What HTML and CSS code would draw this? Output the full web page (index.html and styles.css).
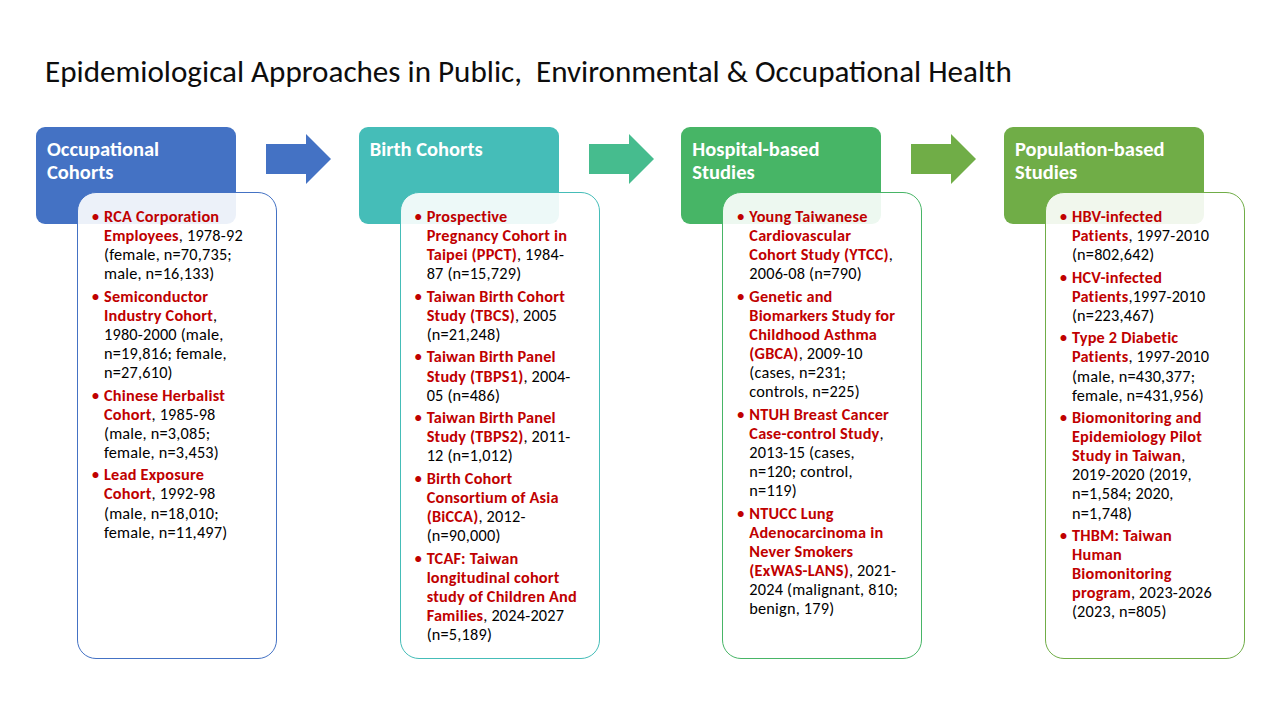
FILE: index.html
```html
<!DOCTYPE html>
<html lang="en">
<head>
<meta charset="utf-8">
<title>Epidemiological Approaches</title>
<link rel="stylesheet" href="styles.css">
</head>
<body>
<main class="slide">
  <h1 class="title">Epidemiological Approaches in Public,&nbsp; Environmental &amp; Occupational Health</h1>
  <section class="flow">
    <div class="head h1">Occupational<br>Cohorts</div>
    <svg class="arrow a1" viewBox="0 0 65 50" width="65" height="50"><path d="M0 10H40V0L65 25L40 50V40H0Z" fill="#4472C4"/></svg>
    <div class="head h2">Birth Cohorts</div>
    <svg class="arrow a2" viewBox="0 0 65 50" width="65" height="50"><path d="M0 10H40V0L65 25L40 50V40H0Z" fill="#46BC8E"/></svg>
    <div class="head h3">Hospital-based<br>Studies</div>
    <svg class="arrow a3" viewBox="0 0 65 50" width="65" height="50"><path d="M0 10H40V0L65 25L40 50V40H0Z" fill="#70AD47"/></svg>
    <div class="head h4">Population-based<br>Studies</div>

    <ul class="box b1">
      <li><span><b>RCA Corporation<br>Employees</b>, 1978-92<br>(female, n=70,735;<br>male, n=16,133)</span></li>
      <li><span><b>Semiconductor<br>Industry Cohort</b>,<br>1980-2000 (male,<br>n=19,816; female,<br>n=27,610)</span></li>
      <li><span><b>Chinese Herbalist<br>Cohort</b>, 1985-98<br>(male, n=3,085;<br>female, n=3,453)</span></li>
      <li><span><b>Lead Exposure<br>Cohort</b>, 1992-98<br>(male, n=18,010;<br>female, n=11,497)</span></li>
    </ul>
    <ul class="box b2">
      <li><span><b>Prospective<br>Pregnancy Cohort in<br>Taipei (PPCT)</b>, 1984-<br>87 (n=15,729)</span></li>
      <li><span><b>Taiwan Birth Cohort<br>Study (TBCS)</b>, 2005<br>(n=21,248)</span></li>
      <li><span><b>Taiwan Birth Panel<br>Study (TBPS1)</b>, 2004-<br>05 (n=486)</span></li>
      <li><span><b>Taiwan Birth Panel<br>Study (TBPS2)</b>, 2011-<br>12 (n=1,012)</span></li>
      <li><span><b>Birth Cohort<br>Consortium of Asia<br>(BiCCA)</b>, 2012-<br>(n=90,000)</span></li>
      <li><span><b>TCAF: Taiwan<br>longitudinal cohort<br>study of Children And<br>Families</b>, 2024-2027<br>(n=5,189)</span></li>
    </ul>
    <ul class="box b3">
      <li><span><b>Young Taiwanese<br>Cardiovascular<br>Cohort Study (YTCC)</b>,<br>2006-08 (n=790)</span></li>
      <li><span><b>Genetic and<br>Biomarkers Study for<br>Childhood Asthma<br>(GBCA)</b>, 2009-10<br>(cases, n=231;<br>controls, n=225)</span></li>
      <li><span><b>NTUH Breast Cancer<br>Case-control Study</b>,<br>2013-15 (cases,<br>n=120; control,<br>n=119)</span></li>
      <li><span><b>NTUCC Lung<br>Adenocarcinoma in<br>Never Smokers<br>(ExWAS-LANS)</b>, 2021-<br>2024 (malignant, 810;<br>benign, 179)</span></li>
    </ul>
    <ul class="box b4">
      <li><span><b>HBV-infected<br>Patients</b>, 1997-2010<br>(n=802,642)</span></li>
      <li><span><b>HCV-infected<br>Patients</b>,1997-2010<br>(n=223,467)</span></li>
      <li><span><b>Type 2 Diabetic<br>Patients</b>, 1997-2010<br>(male, n=430,377;<br>female, n=431,956)</span></li>
      <li><span><b>Biomonitoring and<br>Epidemiology Pilot<br>Study in Taiwan</b>,<br>2019-2020 (2019,<br>n=1,584; 2020,<br>n=1,748)</span></li>
      <li><span><b>THBM: Taiwan<br>Human<br>Biomonitoring<br>program</b>, 2023-2026<br>(2023, n=805)</span></li>
    </ul>
  </section>
</main>
</body>
</html>
```

FILE: styles.css
```css
* { box-sizing: border-box; }
html, body { margin: 0; padding: 0; background: #ffffff; }
body {
  width: 1280px;
  height: 720px;
  overflow: hidden;
  font-family: Carlito, Calibri, Lato, "Noto Sans", sans-serif;
  color: #000000;
}
.slide {
  width: 1280px;
  height: 720px;
  padding: 52px 0 0 36px;
}
.title {
  margin: 0 0 0 9px;
  font-weight: 400;
  font-size: 31.1px;
  line-height: 38px;
  color: #0d0d0d;
  white-space: nowrap;
}
.flow {
  margin-top: 37px;
  display: grid;
  grid-template-columns: 200px 30px 65px 27.67px 200px 30px 65px 27.67px 200px 30px 65px 27.67px 200px 41px;
  grid-template-rows: 97px auto;
}
.head {
  grid-row: 1;
  border-radius: 9px;
  color: #ffffff;
  font-weight: 700;
  font-size: 20.5px;
  line-height: 22.5px;
  padding: 11px 11px 0 11px;
  white-space: nowrap;
}
.h1 { grid-column: 1; background: #4472C4; }
.h2 { grid-column: 5; background: #45BDB8; }
.h3 { grid-column: 9; background: #47B566; }
.h4 { grid-column: 13; background: #70AD47; }
.arrow { grid-row: 1; align-self: start; margin-top: 7px; display: block; }
.a1 { grid-column: 3; }
.a2 { grid-column: 7; }
.a3 { grid-column: 11; }

.box {
  grid-row: 2;
  list-style: none;
  margin: -32px 0 0 41px;
  width: 200px;
  height: 467px;
  border: 1px solid;
  border-radius: 19px;
  background: rgba(255, 255, 255, 0.9);
  padding: 14px 2px 0 14px;
  font-size: 16.3px;
  line-height: 19.1px;
  letter-spacing: 0.2px;
}
.b1 { grid-column: 1 / span 3; border-color: #4472C4; }
.b2 { grid-column: 5 / span 3; border-color: #45BDB8; }
.b3 { grid-column: 9 / span 3; border-color: #47B566; }
.b4 { grid-column: 13 / span 2; border-color: #70AD47; }

.box li {
  display: grid;
  grid-template-columns: 12px auto;
  margin-bottom: 3.4px;
  white-space: nowrap;
}
.box li::before {
  content: "\2022";
  color: #C00000;
  font-weight: 700;
  font-size: 14px;
}
.box b { color: #C00000; font-weight: 700; }
```
